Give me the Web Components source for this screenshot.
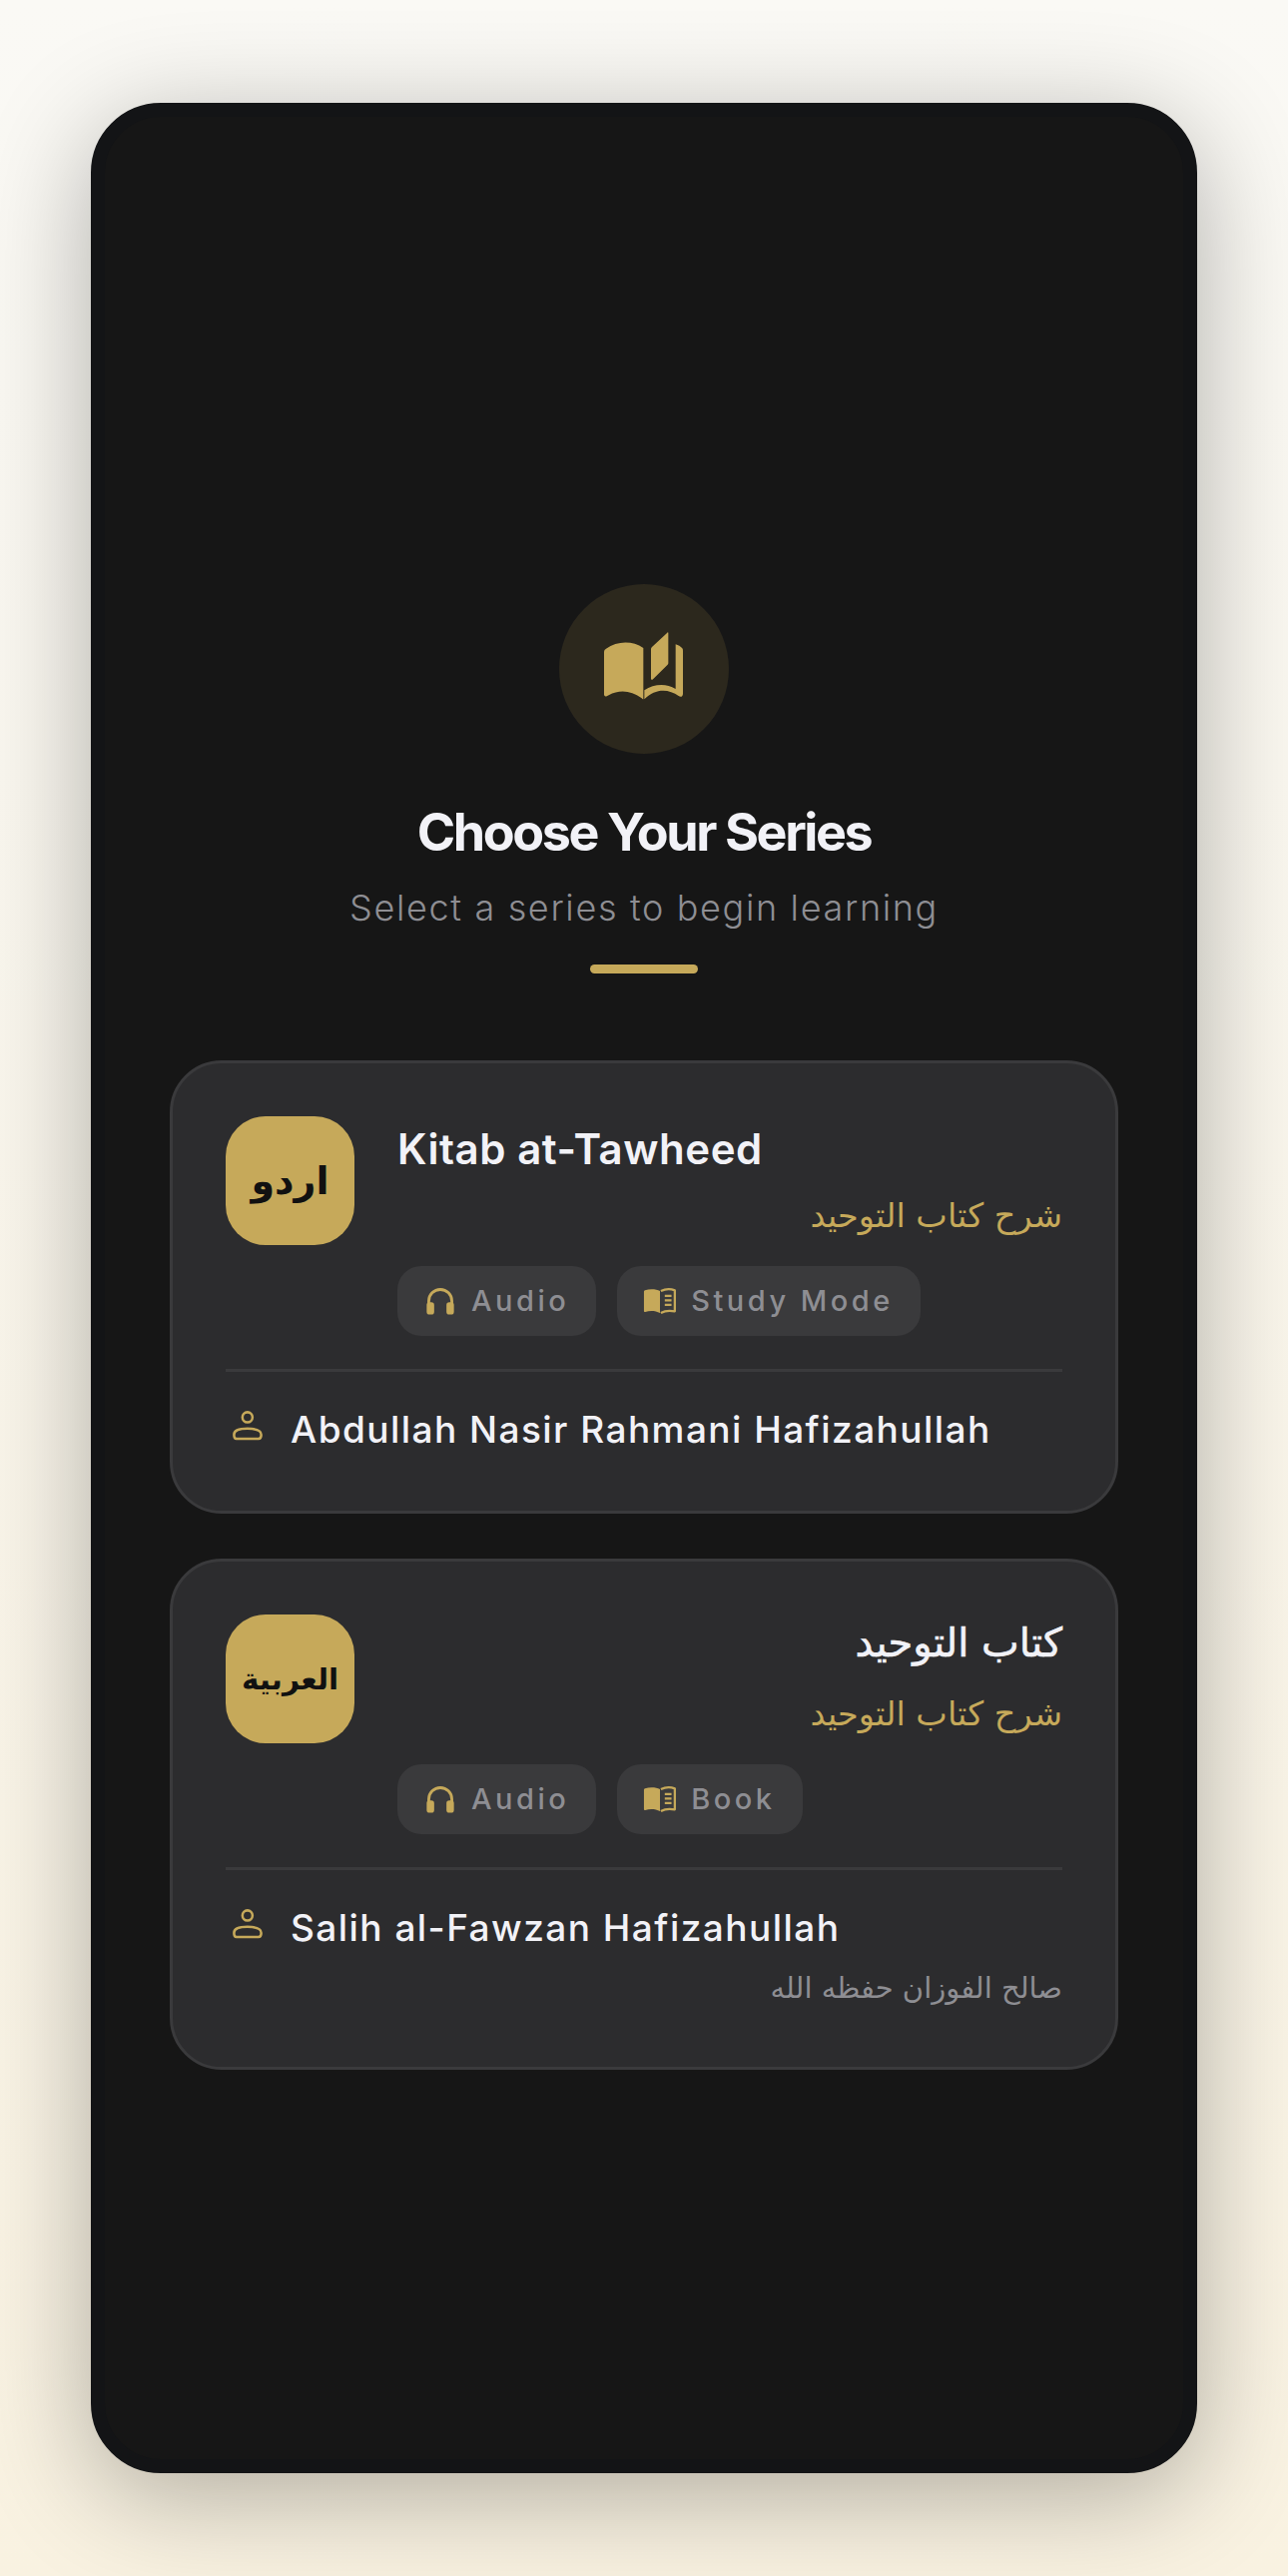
<!DOCTYPE html>
<html><head><meta charset="utf-8">
<style>
html,body{margin:0;height:100%}
body{width:1290px;height:2580px;background:linear-gradient(180deg,#faf9f5 0%,#f9f2e1 100%);overflow:hidden;font-family:Inter,"DejaVu Sans",sans-serif}
</style></head><body>
<template id="t-frame"><style>
:host{display:block;box-sizing:border-box;width:1108px;height:2374px;margin:103px auto 0;border:14px solid #131416;border-radius:70px;background:#161616;box-shadow:0 22px 110px rgba(0,0,0,.3);padding:468px 65px 0;}
</style><slot></slot></template>
<template id="t-header"><style>
:host{display:flex;flex-direction:column;align-items:center;margin-bottom:87px}
.c{width:170px;height:170px;border-radius:50%;background:#2c281d;display:flex;align-items:center;justify-content:center}
h1{margin:48px 0 0;font:700 52px/62px Inter,sans-serif;letter-spacing:-2.4px;color:#f2f2f7}
p{margin:20px 0 0;font:300 36px/48px Inter,sans-serif;letter-spacing:1.65px;color:#8e8e93}
i{display:block;width:108px;height:9px;border-radius:5px;background:#c6a95a;margin-top:33px}
svg{display:block;margin-top:-6px}
</style><div class="c"><svg width="80" height="70" viewBox="195 30 240 210"><path fill="#c6a95a" d="M195 92q0-6 6-9c34-24 80-24 112-2V235c-2 0-3-2-6-4-30-22-66-26-98-8l-6 3c-5 2-8-1-8-6zM336 84q0-3 3-6l46-43c2-2 3-1 3 2v89q0 3-2 5l-44 44c-3 3-6 1-6-2zM410 70c8 2 15 6 20 12q2 3 2 7V218c0 9-7 12-13 7-30-22-70-24-103 10V208c28-18 64-22 94-4z"/></svg></div><h1><slot name="title"></slot></h1><p><slot name="sub"></slot></p><i></i></template>
<template id="t-card"><style>
:host{display:block;box-sizing:border-box;width:950px;margin-bottom:45px;background:#2c2c2e;border:3px solid #3a3a3c;border-radius:52px;padding:53px 53px 57px}
.top{display:flex;gap:43px}
.body{flex:1;min-width:0;padding-top:7px}
.badge{flex:none;width:129px;height:129px;border-radius:40px;background:#c6a95a;color:#111;display:flex;align-items:center;justify-content:center;font-family:"DejaVu Sans",sans-serif;font-weight:700}
.chips{display:flex;gap:21px;margin-top:28px}
.rule{height:3px;background:#3a3a3c;margin-top:33px}
.author{display:flex;padding-top:34px}
.pi{flex:none;width:61px;padding-left:4px}
.pi svg{display:block;margin-top:2px}
.an{flex:1;min-width:0}
</style><div class="top"><div class="badge" part="badge"><slot name="badge"></slot></div><div class="body"><slot name="title"></slot><slot name="sub"></slot><div class="chips"><slot name="chips"></slot></div></div></div><div class="rule"></div><div class="author"><div class="pi"><svg width="37" height="37" viewBox="30 30 110 110" fill="none" stroke="#c6a95a" stroke-width="7.500"><circle cx="83" cy="58" r="15"/><path d="M43 110C43 97 60 92 83 92C106 92 124 97 124 110C124 118 122 122 116 122H50C45 122 43 118 43 110Z" stroke-linejoin="round"/></svg></div><div class="an"><slot name="author"></slot></div></div></template>
<template id="t-chip"><style>
:host{display:inline-flex;align-items:center;box-sizing:border-box;height:70px;padding:0 27px 0 25px;border-radius:24px;background:#3a3a3c;color:#8e8e93;font:500 29px/36px Inter,sans-serif;letter-spacing:3.5px;gap:13px}
svg{display:block;flex:none}
</style><svg id="i" width="36" height="36" viewBox="0 0 24 24" fill="#c6a95a"></svg><slot></slot></template>
<script>
function def(n,t){customElements.define(n,class extends HTMLElement{constructor(){super();this.attachShadow({mode:'open'}).appendChild(document.getElementById(t).content.cloneNode(true))}})}
def('app-frame','t-frame');def('page-header','t-header');def('series-card','t-card');
const H='<path fill="none" stroke="#c6a95a" stroke-width="1.900" d="M4.300 15v-3a7.700 7.700 0 0 1 15.400 0v3"/><rect x="2.900" y="12.800" width="5" height="8.200" rx="1.900"/><rect x="16.100" y="12.800" width="5" height="8.200" rx="1.900"/>';
const B='<path d="M1.300 5.600Q1.300 5 2 4.800C5 3.900 9.500 3.900 12 5.400V20C9 18.300 5 18.300 2.200 19.300Q1.300 19.600 1.300 18.700Z"/><path fill="none" stroke="#c6a95a" stroke-width="1.500" stroke-linejoin="round" d="M12.600 5.400C15.500 3.900 19.500 3.900 21.900 4.900V18.900C19 18.300 15.500 18.300 12.600 20M15.200 8.500H19.700M15.200 11.500H19.700M15.200 14.500H19.700"/>';
customElements.define('meta-chip',class extends HTMLElement{constructor(){super();this.attachShadow({mode:'open'}).appendChild(document.getElementById('t-chip').content.cloneNode(true));}
connectedCallback(){this.shadowRoot.getElementById('i').innerHTML=this.getAttribute('icon')==='book'?B:H}});
</script>
<app-frame>
<page-header><span slot="title">Choose Your Series</span><span slot="sub">Select a series to begin learning</span></page-header>
<series-card>
<span slot="badge" style="font-size:38px" dir="rtl" lang="ur">اردو</span>
<div slot="title" style="font:600 42px/52px Inter,sans-serif;letter-spacing:.55px;color:#f2f2f7">Kitab at-Tawheed</div>
<div slot="sub" dir="rtl" style="font:400 33.500px/44px 'DejaVu Sans',sans-serif;color:#c6a95a;margin-top:19px">شرح كتاب التوحيد</div>
<meta-chip slot="chips" icon="audio">Audio</meta-chip><meta-chip slot="chips" icon="book">Study Mode</meta-chip>
<div slot="author" style="font:500 37px/48px Inter,sans-serif;letter-spacing:1.45px;color:#f2f2f7">Abdullah Nasir Rahmani Hafizahullah</div>
</series-card>
<series-card>
<span slot="badge" style="font-size:29.500px" dir="rtl" lang="ar">العربية</span>
<div slot="title" dir="rtl" style="font:400 40px/52px 'DejaVu Sans',sans-serif;-webkit-text-stroke:.6px #f2f2f7;color:#f2f2f7;margin-top:-5px">كتاب التوحيد</div>
<div slot="sub" dir="rtl" style="font:400 33.500px/44px 'DejaVu Sans',sans-serif;color:#c6a95a;margin-top:24px">شرح كتاب التوحيد</div>
<meta-chip slot="chips" icon="audio">Audio</meta-chip><meta-chip slot="chips" icon="book">Book</meta-chip>
<div slot="author" style="font:500 37px/48px Inter,sans-serif;letter-spacing:1.45px;color:#f2f2f7">Salih al-Fawzan Hafizahullah</div>
<div slot="author" dir="rtl" style="font:400 29px/40px 'DejaVu Sans',sans-serif;color:#8e8e93;margin-top:16px;padding-bottom:2px">صالح الفوزان حفظه الله</div>
</series-card>
</app-frame>
</body></html>
